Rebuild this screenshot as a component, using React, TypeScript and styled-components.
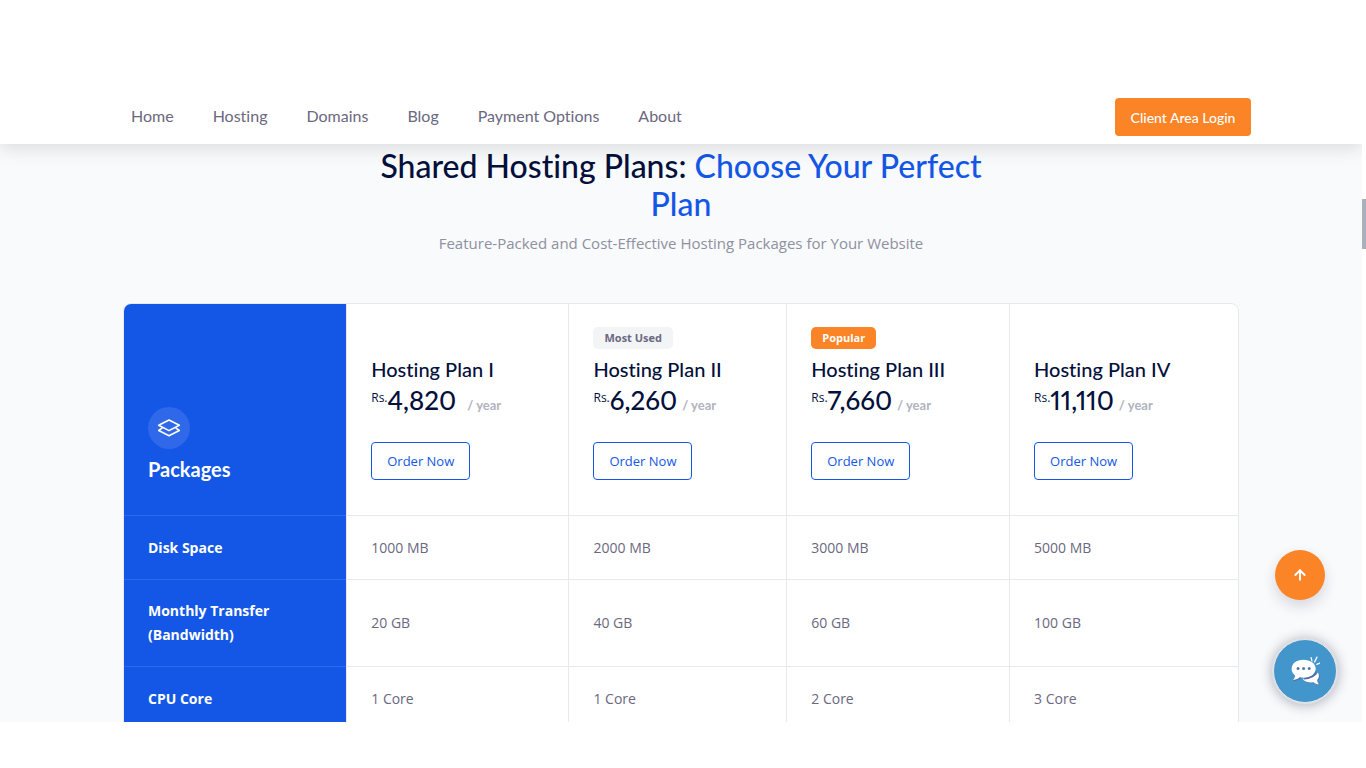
import React from "react";
import styled, { createGlobalStyle } from "styled-components";
import { FiArrowUp } from "react-icons/fi";

const display = `Lato, "Liberation Sans", sans-serif`;
const text = `"Open Sans", "Noto Sans", sans-serif`;

const color = {
  blue: "#1457e6",
  orange: "#fa8426",
  navy: "#03103b",
  slate: "#6b6880",
  muted: "#8f90a0",
  line: "#e8e9eb",
  wash: "#f8fafc",
};

const GlobalStyle = createGlobalStyle`
  *, *::before, *::after { box-sizing: border-box; }
  body {
    margin: 0;
    background: #fff;
    font-family: ${text};
    font-size: 15px;
    font-variant-ligatures: none;
    line-height: 24px;
    color: ${color.slate};
  }
  h1, p { margin: 0; }
  a { text-decoration: none; }
  button { font-family: inherit; cursor: pointer; }
`;

const Frame = styled.div`
  display: grid;
  grid-template-columns: minmax(0, 1fr) 4px;
  height: 100vh;
  padding-bottom: 46px;
`;

const Viewport = styled.div`
  position: relative;
  display: flex;
  flex-direction: column;
  min-height: 0;
  overflow: hidden;
  background: ${color.wash};
`;

const Track = styled.div`
  padding-top: 199px;
`;

const Thumb = styled.div`
  height: 50px;
  background: #abb0bd;
`;

const Header = styled.header`
  position: relative;
  z-index: 2;
  flex: none;
  padding: 90px 24px 0;
  background: #fff;
  box-shadow: 0 4px 18px rgba(0, 0, 0, 0.13);
`;

const HeaderInner = styled.div`
  display: flex;
  align-items: center;
  justify-content: space-between;
  max-width: 1140px;
  height: 54px;
  margin: 0 auto;
`;

const Nav = styled.nav`
  display: flex;
  gap: 39px;
  padding: 0 0 2px 20px;
`;

const NavLink = styled.a`
  font-family: ${display};
  font-size: 16px;
  color: ${color.slate};
`;

const LoginButton = styled.button`
  width: 136px;
  height: 38px;
  border: 0;
  border-radius: 4px;
  background: ${color.orange};
  color: #fff;
  && { font-family: ${display}; }
  font-size: 14px;
  font-weight: 500;
`;

const Section = styled.main`
  flex: none;
  padding: 3px 24px 0;
`;

const Title = styled.h1`
  max-width: 640px;
  margin: 0 auto;
  font-family: ${display};
  font-size: 32px;
  font-weight: 500;
  line-height: 38px;
  text-align: center;
  color: ${color.navy};

  span { color: ${color.blue}; }
`;

const Subtitle = styled.p`
  padding: 8px 0 48px;
  text-align: center;
  color: ${color.muted};
`;

const TableCard = styled.div`
  max-width: 1116px;
  margin: 0 auto;
  overflow: hidden;
  border: 1px solid ${color.line};
  border-radius: 8px;
  background: #fff;
`;

const PlanTable = styled.table`
  width: 100%;
  table-layout: fixed;
  border-collapse: separate;
  border-spacing: 0;

  tr > * + * { border-left: 1px solid ${color.line}; }
`;

const labelCell = `
  background: ${color.blue};
  border-bottom: 1px solid #2f69e9;
  color: #fff;
  text-align: left;
`;

const CornerCell = styled.th`
  ${labelCell}
  height: 212px;
  padding: 0 24px 34px;
  vertical-align: bottom;
  font-family: ${display};
  font-size: 20px;
  font-weight: 700;
  line-height: 24px;
`;

const IconDisc = styled.span`
  display: flex;
  align-items: center;
  justify-content: center;
  width: 42px;
  height: 42px;
  margin-bottom: 8px;
  border-radius: 50%;
  background: #2f69e9;
`;

const PlanCell = styled.th`
  padding: 0 24px 35px;
  border-bottom: 1px solid ${color.line};
  vertical-align: bottom;
  text-align: left;
  font-weight: 400;
`;

const Badge = styled.span<{ $hot?: boolean }>`
  display: block;
  width: fit-content;
  height: 22px;
  margin-bottom: 8px;
  padding: 0 11px;
  border-radius: 5px;
  background: ${(p) => (p.$hot ? color.orange : "#f2f4f6")};
  color: ${(p) => (p.$hot ? "#fff" : color.slate)};
  font-size: 11px;
  font-weight: 700;
  line-height: 22px;
`;

const PlanName = styled.span`
  display: block;
  font-family: ${display};
  font-size: 20px;
  font-weight: 500;
  line-height: 24px;
  color: ${color.navy};
`;

const Price = styled.span`
  display: flex;
  align-items: baseline;
  height: 38px;
  margin-bottom: 23px;
  font-family: ${display};
  font-size: 26px;
  font-weight: 500;
  font-variant-numeric: proportional-nums;
  line-height: 38px;
  color: ${color.navy};
`;

const Currency = styled.span`
  align-self: flex-start;
  font-family: ${text};
  font-size: 12px;
  font-weight: 400;
  line-height: 34px;
`;

const Period = styled.span<{ $wide?: boolean }>`
  margin-left: ${(p) => (p.$wide ? 11 : 5)}px;
  font-size: 13px;
  font-weight: 700;
  color: #b1b3bf;
`;

const OrderButton = styled.button`
  display: block;
  width: 99px;
  height: 38px;
  padding: 0;
  border: 1px solid ${color.blue};
  border-radius: 4px;
  background: #fff;
  color: ${color.blue};
  font-size: 13px;
`;

const LabelCell = styled.th`
  ${labelCell}
  height: 64px;
  padding: 19px 24px;
  font-weight: 700;
  font-size: 14px;
`;

const ValueCell = styled.td`
  padding: 19px 24px;
  border-bottom: 1px solid ${color.line};
  font-size: 14px;
`;

const Floating = styled.div`
  position: absolute;
  z-index: 3;
  right: 25px;
  bottom: 19px;
  display: flex;
  flex-direction: column;
  align-items: center;
  gap: 39px;
`;

const TopButton = styled.button`
  display: flex;
  align-items: center;
  justify-content: center;
  width: 50px;
  height: 50px;
  margin-right: 10px;
  padding: 0;
  border: 0;
  border-radius: 50%;
  background: ${color.orange};
  color: #fff;
  font-size: 16px;
  box-shadow: 0 6px 14px rgba(30, 30, 60, 0.16);
`;

const ChatButton = styled.button`
  display: flex;
  align-items: center;
  justify-content: center;
  width: 64px;
  height: 64px;
  padding: 0;
  border: 1px solid #e3e6ea;
  border-radius: 50%;
  background: #4296cc;
  box-shadow: 0 0 0 1px #dfe1e5, 0 1px 12px 2px rgba(30, 30, 50, 0.3);
`;

const plans = [
  { name: "Hosting Plan I", price: "4,820", wide: true, width: "19.95%" },
  { name: "Hosting Plan II", price: "6,260", badge: "Most Used", width: "19.55%" },
  { name: "Hosting Plan III", price: "7,660", badge: "Popular", hot: true, width: "20%" },
  { name: "Hosting Plan IV", price: "11,110", width: "20.55%" },
];

const rows = [
  { label: "Disk Space", values: ["1000 MB", "2000 MB", "3000 MB", "5000 MB"] },
  { label: "Monthly Transfer (Bandwidth)", values: ["20 GB", "40 GB", "60 GB", "100 GB"] },
  { label: "CPU Core", values: ["1 Core", "1 Core", "2 Core", "3 Core"] },
];

const links = ["Home", "Hosting", "Domains", "Blog", "Payment Options", "About"];

const StackIcon = () => (
  <svg
    width="24"
    height="24"
    viewBox="0 0 24 24"
    fill="none"
    stroke="currentColor"
    strokeWidth="1.6"
    strokeLinejoin="round"
    strokeLinecap="round"
    aria-hidden="true"
  >
    <path d="M12 4L22.300 9.300L12 14.600L1.700 9.300z" />
    <path d="M5 12.200L1.700 14.500L12 19.800L22.300 14.500L19 12.200" />
  </svg>
);

const ChatIcon = () => (
  <svg width="30" height="30" viewBox="0 0 28 28" aria-hidden="true">
    <path d="M26 15.500c1.600 2.400 1.200 5.200-.6 6.900.1 1.700.8 3 1.600 4.200-2.200-.2-3.800-1-4.900-2.200-4.300 1-8.500-.2-10.300-3.200 6.200.6 12-1.400 14.200-5.700z" fill="#5b68a0" transform="translate(.7 .8)" />
    <path d="M26 15.500c1.600 2.400 1.200 5.200-.6 6.900.1 1.700.8 3 1.600 4.200-2.200-.2-3.800-1-4.900-2.200-4.300 1-8.500-.2-10.300-3.200 6.200.6 12-1.400 14.200-5.700z" fill="#fff" />
    <path d="M12.500 3.500C6 3.500 1.500 7 1.500 12c0 2.500 1.200 4.700 3.200 6.200 0 1.800-.9 3.300-2.200 4.600 3-.2 5.200-1.300 6.700-2.900 1 .3 2.200.4 3.300.4 6.500 0 11.500-3.500 11.500-8.300 0-5-5-8.500-11.500-8.500z" fill="#fff" />
    <path d="M3 23c3-.2 5.300-1.200 6.900-2.700M13 21.300c5.500-.1 10-2.600 11.500-6.800" fill="none" stroke="#5b68a0" strokeWidth="1.200" />
    <g fill="#5478ad">
      <circle cx="7.500" cy="11.700" r="1.400" />
      <circle cx="12.700" cy="11.700" r="1.400" />
      <circle cx="17.900" cy="11.700" r="1.400" />
    </g>
    <path d="M20.500 4.500l-.8-3M23 5.500l2.200-4.500M25 7.800l3-1.200" fill="none" stroke="#fff" strokeWidth="1.200" strokeLinecap="round" />
  </svg>
);

export default function App() {
  return (
    <>
      <GlobalStyle />
      <Frame>
        <Viewport>
          <Header>
            <HeaderInner>
              <Nav>
                {links.map((l) => (
                  <NavLink href="#" key={l}>{l}</NavLink>
                ))}
              </Nav>
              <LoginButton type="button">Client Area Login</LoginButton>
            </HeaderInner>
          </Header>
          <Section>
            <Title>
              Shared Hosting Plans: <span>Choose Your Perfect Plan</span>
            </Title>
            <Subtitle>Feature-Packed and Cost-Effective Hosting Packages for Your Website</Subtitle>
            <TableCard>
              <PlanTable>
                <colgroup>
                  <col width="19.95%" />
                  {plans.map((p) => (
                    <col key={p.name} width={p.width} />
                  ))}
                </colgroup>
                <thead>
                  <tr>
                    <CornerCell scope="col">
                      <IconDisc><StackIcon /></IconDisc>
                      Packages
                    </CornerCell>
                    {plans.map((p) => (
                      <PlanCell scope="col" key={p.name}>
                        {p.badge && <Badge $hot={p.hot}>{p.badge}</Badge>}
                        <PlanName>{p.name}</PlanName>
                        <Price>
                          <Currency>Rs.</Currency>
                          {p.price}
                          <Period $wide={p.wide}>/ year</Period>
                        </Price>
                        <OrderButton type="button">Order Now</OrderButton>
                      </PlanCell>
                    ))}
                  </tr>
                </thead>
                <tbody>
                  {rows.map((r) => (
                    <tr key={r.label}>
                      <LabelCell scope="row">{r.label}</LabelCell>
                      {r.values.map((v, i) => (
                        <ValueCell key={i}>{v}</ValueCell>
                      ))}
                    </tr>
                  ))}
                </tbody>
              </PlanTable>
            </TableCard>
          </Section>
          <Floating>
            <TopButton type="button" aria-label="Back to top"><FiArrowUp strokeWidth={3} /></TopButton>
            <ChatButton type="button" aria-label="Open chat"><ChatIcon /></ChatButton>
          </Floating>
        </Viewport>
        <Track>
          <Thumb />
        </Track>
      </Frame>
    </>
  );
}
